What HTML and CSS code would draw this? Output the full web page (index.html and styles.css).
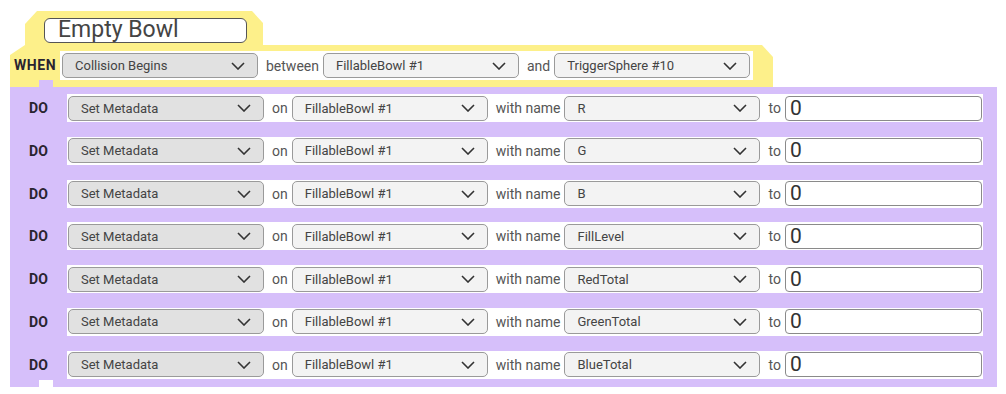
FILE: index.html
```html
<!DOCTYPE html>
<html>
<head>
<meta charset="utf-8">
<link rel="stylesheet" href="styles.css">
</head>
<body>
<div class="script">
  <div class="when">
    <div class="when-tab"><div class="title">Empty Bowl</div></div>
    <div class="when-row">
      <span class="kw when-kw">WHEN</span>
      <div class="strip when-strip">
        <div class="dd dd-action"><span>Collision Begins</span><svg class="chev" viewBox="0 0 14 8"><polyline points="1,1 7,7 13,1"/></svg></div>
        <span class="lbl">between</span>
        <div class="dd"><span>FillableBowl #1</span><svg class="chev" viewBox="0 0 14 8"><polyline points="1,1 7,7 13,1"/></svg></div>
        <span class="lbl">and</span>
        <div class="dd"><span>TriggerSphere #10</span><svg class="chev" viewBox="0 0 14 8"><polyline points="1,1 7,7 13,1"/></svg></div>
      </div>
    </div>
  </div>
  <div class="do-block">
    <div class="do-row">
      <span class="kw do-kw">DO</span>
      <div class="strip do-strip">
        <div class="dd dd-action"><span>Set Metadata</span><svg class="chev" viewBox="0 0 14 8"><polyline points="1,1 7,7 13,1"/></svg></div>
        <span class="lbl">on</span>
        <div class="dd"><span>FillableBowl #1</span><svg class="chev" viewBox="0 0 14 8"><polyline points="1,1 7,7 13,1"/></svg></div>
        <span class="lbl">with name</span>
        <div class="dd"><span>R</span><svg class="chev" viewBox="0 0 14 8"><polyline points="1,1 7,7 13,1"/></svg></div>
        <span class="lbl lbl-to">to</span>
        <div class="val">0</div>
      </div>
    </div>
    <div class="do-row">
      <span class="kw do-kw">DO</span>
      <div class="strip do-strip">
        <div class="dd dd-action"><span>Set Metadata</span><svg class="chev" viewBox="0 0 14 8"><polyline points="1,1 7,7 13,1"/></svg></div>
        <span class="lbl">on</span>
        <div class="dd"><span>FillableBowl #1</span><svg class="chev" viewBox="0 0 14 8"><polyline points="1,1 7,7 13,1"/></svg></div>
        <span class="lbl">with name</span>
        <div class="dd"><span>G</span><svg class="chev" viewBox="0 0 14 8"><polyline points="1,1 7,7 13,1"/></svg></div>
        <span class="lbl lbl-to">to</span>
        <div class="val">0</div>
      </div>
    </div>
    <div class="do-row">
      <span class="kw do-kw">DO</span>
      <div class="strip do-strip">
        <div class="dd dd-action"><span>Set Metadata</span><svg class="chev" viewBox="0 0 14 8"><polyline points="1,1 7,7 13,1"/></svg></div>
        <span class="lbl">on</span>
        <div class="dd"><span>FillableBowl #1</span><svg class="chev" viewBox="0 0 14 8"><polyline points="1,1 7,7 13,1"/></svg></div>
        <span class="lbl">with name</span>
        <div class="dd"><span>B</span><svg class="chev" viewBox="0 0 14 8"><polyline points="1,1 7,7 13,1"/></svg></div>
        <span class="lbl lbl-to">to</span>
        <div class="val">0</div>
      </div>
    </div>
    <div class="do-row">
      <span class="kw do-kw">DO</span>
      <div class="strip do-strip">
        <div class="dd dd-action"><span>Set Metadata</span><svg class="chev" viewBox="0 0 14 8"><polyline points="1,1 7,7 13,1"/></svg></div>
        <span class="lbl">on</span>
        <div class="dd"><span>FillableBowl #1</span><svg class="chev" viewBox="0 0 14 8"><polyline points="1,1 7,7 13,1"/></svg></div>
        <span class="lbl">with name</span>
        <div class="dd"><span>FillLevel</span><svg class="chev" viewBox="0 0 14 8"><polyline points="1,1 7,7 13,1"/></svg></div>
        <span class="lbl lbl-to">to</span>
        <div class="val">0</div>
      </div>
    </div>
    <div class="do-row">
      <span class="kw do-kw">DO</span>
      <div class="strip do-strip">
        <div class="dd dd-action"><span>Set Metadata</span><svg class="chev" viewBox="0 0 14 8"><polyline points="1,1 7,7 13,1"/></svg></div>
        <span class="lbl">on</span>
        <div class="dd"><span>FillableBowl #1</span><svg class="chev" viewBox="0 0 14 8"><polyline points="1,1 7,7 13,1"/></svg></div>
        <span class="lbl">with name</span>
        <div class="dd"><span>RedTotal</span><svg class="chev" viewBox="0 0 14 8"><polyline points="1,1 7,7 13,1"/></svg></div>
        <span class="lbl lbl-to">to</span>
        <div class="val">0</div>
      </div>
    </div>
    <div class="do-row">
      <span class="kw do-kw">DO</span>
      <div class="strip do-strip">
        <div class="dd dd-action"><span>Set Metadata</span><svg class="chev" viewBox="0 0 14 8"><polyline points="1,1 7,7 13,1"/></svg></div>
        <span class="lbl">on</span>
        <div class="dd"><span>FillableBowl #1</span><svg class="chev" viewBox="0 0 14 8"><polyline points="1,1 7,7 13,1"/></svg></div>
        <span class="lbl">with name</span>
        <div class="dd"><span>GreenTotal</span><svg class="chev" viewBox="0 0 14 8"><polyline points="1,1 7,7 13,1"/></svg></div>
        <span class="lbl lbl-to">to</span>
        <div class="val">0</div>
      </div>
    </div>
    <div class="do-row">
      <span class="kw do-kw">DO</span>
      <div class="strip do-strip">
        <div class="dd dd-action"><span>Set Metadata</span><svg class="chev" viewBox="0 0 14 8"><polyline points="1,1 7,7 13,1"/></svg></div>
        <span class="lbl">on</span>
        <div class="dd"><span>FillableBowl #1</span><svg class="chev" viewBox="0 0 14 8"><polyline points="1,1 7,7 13,1"/></svg></div>
        <span class="lbl">with name</span>
        <div class="dd"><span>BlueTotal</span><svg class="chev" viewBox="0 0 14 8"><polyline points="1,1 7,7 13,1"/></svg></div>
        <span class="lbl lbl-to">to</span>
        <div class="val">0</div>
      </div>
    </div>
  </div>
</div>
</body>
</html>
```

FILE: styles.css
```css
* { box-sizing: border-box; }
html, body { margin: 0; padding: 0; background: #ffffff; }
body {
  font-family: Roboto, "Liberation Sans", Arial, sans-serif;
  color: #444;
}
.script { padding-top: 11px; }

.when-tab {
  margin-left: 25px;
  width: 238px;
  height: 34px;
  background: #fdf08a;
  clip-path: polygon(12px 0, 227px 0, 238px 12px, 238px 100%, 0 100%, 0 13px);
  padding: 7px 0 0 19px;
}
.title {
  width: 203px;
  height: 25px;
  border: 1.5px solid #555;
  border-radius: 6px;
  background: #fff;
  font-size: 23px;
  line-height: 22px;
  padding-left: 13px;
  color: #444;
}

.when-row {
  margin-left: 10px;
  width: 763px;
  height: 42px;
  background: #fdf08a;
  clip-path: polygon(15px 0, 752px 0, 763px 12px, 763px 100%, 0 100%, 0 10px);
  display: flex;
  align-items: flex-start;
  padding-top: 6px;
}
.kw {
  font-weight: 700;
  font-size: 14px;
  color: #2a2430;
}
.when-kw {
  width: 50px;
  padding-left: 4px;
  height: 29px;
  line-height: 29px;
  letter-spacing: 0.6px;
}
.strip {
  background: #fff;
  height: 29px;
  display: flex;
  align-items: center;
}
.when-strip { width: 693px; padding-left: 2px; }
.when-strip .lbl { padding: 0 4px 0 8px; }

.dd {
  width: 196px;
  height: 25px;
  flex: none;
  border: 1px solid #9a9a9a;
  border-radius: 5px;
  background: #f3f3f3;
  display: flex;
  align-items: center;
  justify-content: space-between;
  padding: 0 12px 0 12px;
  font-size: 13px;
  color: #444;
}
.dd-action { background: #e1e1e1; }
.chev {
  width: 14px;
  height: 8px;
  fill: none;
  stroke: #333;
  stroke-width: 1.6;
}
.lbl {
  font-size: 14px;
  color: #555;
  padding: 0 4px 0 8px;
  white-space: nowrap;
}
.lbl-to { padding-left: 8px; padding-right: 4px; }

.do-block {
  position: relative;
  margin-left: 10px;
  width: 987px;
  height: 300px;
  background: #d6bffa;
  padding-top: 7px;
  display: flex;
  flex-direction: column;
  gap: 14.8px;
}
.do-block::before {
  content: "";
  position: absolute;
  left: 29px;
  top: -7px;
  width: 14px;
  height: 7px;
  background: #d6bffa;
}
.do-block::after {
  content: "";
  position: absolute;
  left: 29px;
  bottom: 0;
  width: 14px;
  height: 7px;
  background: #fff;
}
.do-row {
  display: flex;
  height: 28px;
}
.do-kw {
  width: 57px;
  text-align: center;
  line-height: 28px;
}
.do-strip {
  width: 916px;
  height: 28px;
  padding: 0 1px;
}
.val {
  flex: 1;
  height: 25px;
  border: 1px solid #8a8a8a;
  border-radius: 4px;
  background: #fff;
  font-size: 21px;
  line-height: 23px;
  padding-left: 4px;
  color: #333;
}
```
